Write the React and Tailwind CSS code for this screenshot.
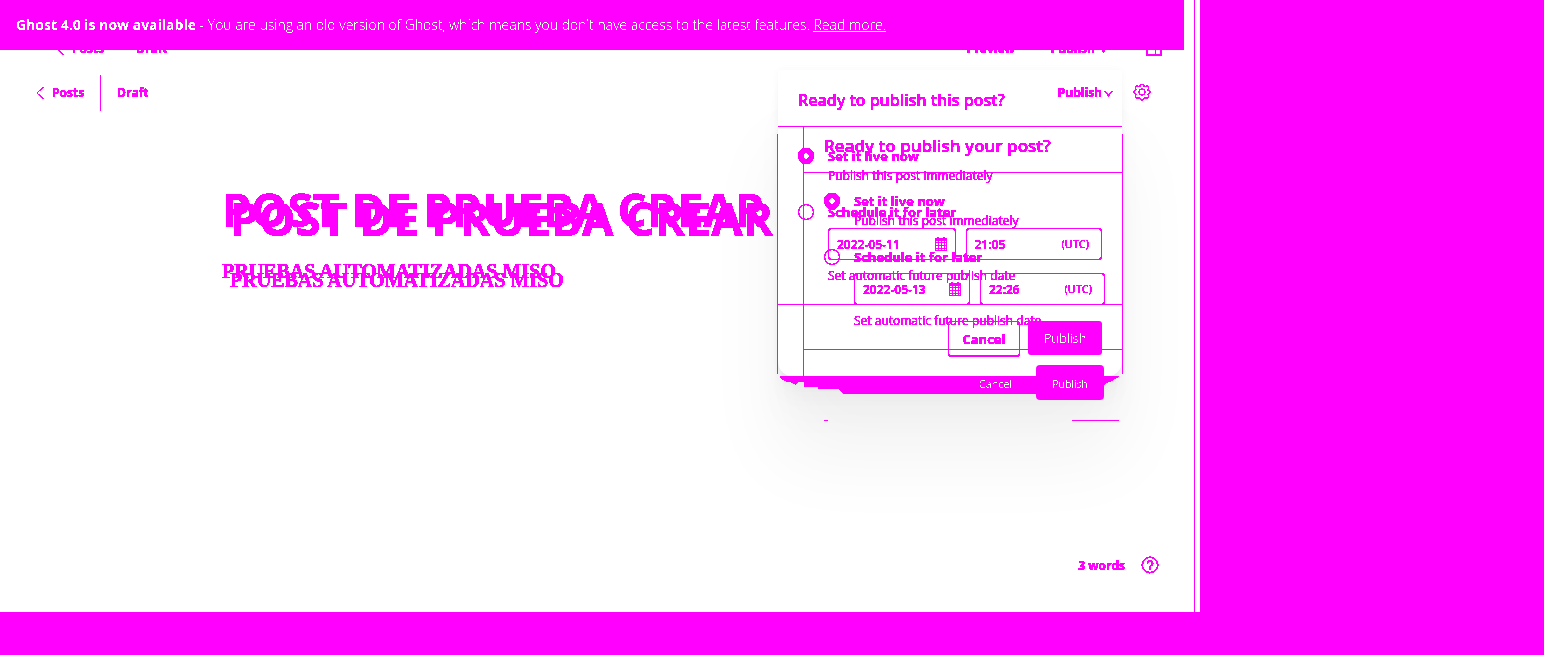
import { useId } from "react";

const INK = "#ff00ff";

function Filters() {
  return (
    <svg className="absolute h-0 w-0" aria-hidden="true">
      <filter id="spread" x="0" y="0" width="100%" height="100%">
        <feComponentTransfer>
          <feFuncA type="discrete" tableValues="0 1 1 1 1 1 1" />
        </feComponentTransfer>
      </filter>
      <filter id="thin" x="0" y="0" width="100%" height="100%">
        <feComponentTransfer>
          <feFuncA type="discrete" tableValues="0 0 1 1" />
        </feComponentTransfer>
      </filter>
    </svg>
  );
}

function ChevronLeft() {
  return (
    <svg width="8" height="14" viewBox="0 0 8 14" fill="none" stroke={INK} strokeWidth="1.2" shapeRendering="crispEdges" aria-hidden="true">
      <path d="M7.5 1 1 7l6.500 6" />
    </svg>
  );
}

function ChevronDown() {
  return (
    <svg width="9" height="8" viewBox="0 0 9 8" fill="none" stroke={INK} strokeWidth="1.6" shapeRendering="crispEdges" aria-hidden="true">
      <path d="M.5 2l4 4.500 4-4.500" />
    </svg>
  );
}

function Gear() {
  return (
    <svg width="18" height="18" viewBox="0 0 24 24" fill="none" stroke={INK} strokeWidth="2" shapeRendering="crispEdges" aria-hidden="true">
      <circle cx="12" cy="12" r="3.800" />
      <path d="M9.600 3.300a2.500 2.500 0 0 1 4.800 0c.3 1.400 1.500 1.900 2.700 1.200a2.400 2.400 0 0 1 3.300 3.300c-.8 1.200-.2 2.400 1.100 2.700a1.800 1.800 0 0 1 0 3.300c-1.300.4-1.900 1.500-1.100 2.700a2.400 2.400 0 0 1-3.300 3.300c-1.200-.8-2.400-.2-2.700 1.200a2.500 2.500 0 0 1-4.800 0c-.3-1.400-1.500-1.900-2.700-1.200a2.400 2.400 0 0 1-3.300-3.300c.8-1.200.2-2.300-1.100-2.700a1.800 1.800 0 0 1 0-3.300c1.300-.3 1.900-1.500 1.100-2.700a2.400 2.400 0 0 1 3.300-3.300c1.200.7 2.400.2 2.700-1.200z" />
    </svg>
  );
}

function Help() {
  return (
    <svg width="18" height="18" viewBox="0 0 18 18" fill="none" stroke={INK} strokeWidth="1.100" aria-hidden="true">
      <circle cx="9" cy="9" r="7.700" />
      <path d="M6.500 7.200a2.500 2.500 0 1 1 3.600 2.200c-.8.400-1.100.8-1.100 1.800" strokeWidth="1.300" />
      <path d="M8.200 13h1.600" strokeWidth="1.300" />
    </svg>
  );
}

function Calendar() {
  return (
    <svg width="12" height="14" viewBox="0 0 12 14" fill={INK} shapeRendering="crispEdges" className="shrink-0" aria-hidden="true">
      <path d="M2 0h2v1h4V0h2v1h2v3H0V1h2z" />
      <path d="M0 4h1v10H0zM3 4h1v10H3zM6 4h1v10H6zM9 4h1v10H9zM11 4h1v10h-1zM0 5h12v1H0zM0 8h12v1H0zM0 11h12v1H0zM0 13h12v1H0z" />
    </svg>
  );
}

function Article({ className }) {
  return (
    <article className={className}>
      <h1 className="text-[46px] leading-[56px] font-bold whitespace-nowrap">POST DE PRUEBA CREAR</h1>
      <p className="mt-[18px] font-['Liberation_Serif',serif] text-[20px] leading-8 font-semibold whitespace-nowrap">
        PRUEBAS AUTOMATIZADAS MISO
      </p>
    </article>
  );
}

function Choice({ name, label, hint, checked }) {
  const id = useId();
  return (
    <div className="grid grid-cols-[30px_1fr]">
      <input
        id={id}
        type="radio"
        name={name}
        defaultChecked={checked}
        className="mt-[2px] h-4 w-4 appearance-none rounded-full border border-[#ff00ff] checked:border-[5px]"
      />
      <label htmlFor={id} className="text-[13px] leading-5 font-bold">{label}</label>
      {hint && <p className="col-start-2 text-[12px] leading-5">{hint}</p>}
    </div>
  );
}

function Panel({ title, titleSize, name, date, time, className, dateWidth, timeWidth, top, buttons }) {
  return (
    <section className={className}>
      <div className="[filter:url(#spread)]">
        <h2 className={`flex h-[57px] items-center border-b border-[#ff00ff] px-5 pt-1 leading-6 ${titleSize}`}>
          {title}
        </h2>
        <div className={top}>
          <Choice name={name} label="Set it live now" hint="Publish this post immediately" checked />
          <div className="mt-4">
            <Choice name={name} label="Schedule it for later" />
          </div>
          <div className="mt-[6px] ml-[30px] flex gap-[10px]">
            <div className={`flex h-8 items-center rounded-[3px] border border-[#ff00ff] px-2 ${dateWidth}`}>
              <input aria-label="Publish date" defaultValue={date} className="w-full min-w-0 bg-transparent pt-[2px] text-[12px] font-semibold outline-none" />
              <Calendar />
            </div>
            <div className={`flex h-8 items-center rounded-[3px] border border-[#ff00ff] pr-3 pl-2 ${timeWidth}`}>
              <input aria-label="Publish time" defaultValue={time} className="w-full min-w-0 bg-transparent pt-[2px] text-[12px] font-semibold outline-none" />
              <span className="text-[11px]">(UTC)</span>
            </div>
          </div>
          <p className="mt-[6px] ml-[30px] text-[12px] leading-5">Set automatic future publish date</p>
        </div>
      </div>
      {buttons}
    </section>
  );
}

function Residue() {
  return (
    <svg className="absolute top-[376px] right-20 h-[46px] w-[340px]" viewBox="780 376 340 46" shapeRendering="crispEdges" aria-hidden="true">
      <path
        fill={INK}
        d="M780 376h340l-3 2-5 3-5 2-3 2h-3v3h-65v6H843l-4-4v-1h-21v-2h-14v-5h-5l-2 1-1 2-2-1-2-1-3-1h-2l-2-1-4-2z"
      />
      <path fill={INK} d="M824 420h4v1h-4zM1072 420h47v1h-47z" />
    </svg>
  );
}

export default function App() {
  return (
    <div className="flex min-h-screen bg-[#ff00ff] pr-[344px] pb-[43px] font-['Open_Sans',sans-serif] text-[#ff00ff]">
      <Filters />
      <main className="relative grid w-full overflow-hidden bg-white">
        <div className="mr-[5px] border-r border-[#ff00ff] [grid-area:1/1]" />

        <div className="relative mr-4 [grid-area:1/1]">
          <header className="flex h-[98px] items-center pr-[22px] pl-14 text-[12px] font-bold [filter:url(#spread)]">
            <a href="#posts" className="flex items-center gap-2"><ChevronLeft />Posts</a>
            <span className="ml-8">Draft</span>
            <button className="ml-auto">Preview</button>
            <button className="ml-9 flex items-center gap-1">Publish<ChevronDown /></button>
            <button aria-label="Toggle sidebar" className="ml-[38px] flex h-[13px] w-4 justify-end border-2 border-[#ff00ff]">
              <span className="h-full w-[5px] border-l border-[#ff00ff]" />
            </button>
          </header>
          <p className="absolute inset-x-0 top-0 h-[50px] bg-[#ff00ff] px-4 text-[14px] leading-[49px] font-light whitespace-nowrap text-white">
            <span className="block [filter:url(#thin)]">
              <strong className="font-bold">Ghost 4.0 is now available</strong> - You are using an old version of Ghost, which means you don't have access to the latest features.{" "}
              <a href="#more" className="underline">Read more.</a>
            </span>
          </p>
          <Article className="mt-[83px] pl-[222px] [filter:url(#spread)]" />
        </div>

        <div className="relative flex flex-col pt-14 [filter:url(#spread)] [grid-area:1/1]">
          <header className="flex h-[73px] items-center pr-[49px] pl-9 text-[12px] font-bold">
            <a href="#posts" className="flex items-center gap-2"><ChevronLeft />Posts</a>
            <span className="ml-4 h-9 border-l border-[#ff00ff] pl-4 leading-9">Draft</span>
          </header>
          <Article className="mt-[61px] pl-[230px]" />
          <footer className="mt-auto flex h-[59px] items-start justify-end gap-4 pr-[41px] text-[12px] leading-6 font-bold">
            <span className="pt-px">3 words</span>
            <button aria-label="Help" className="flex h-6 items-center"><Help /></button>
          </footer>
        </div>

        <Panel
          className="absolute top-[70px] right-[78px] w-[344px] rounded-[3px] rounded-b-2xl bg-white shadow-[0_0_8px_rgba(0,0,0,0.03),0_7px_6px_rgba(0,0,0,0.01),0_12px_10px_rgba(0,0,0,0.015),0_22px_18px_rgba(0,0,0,0.02),0_42px_34px_rgba(0,0,0,0.02),0_80px_80px_rgba(0,0,0,0.05)]"
          title="Ready to publish this post?"
          titleSize="text-[16px] font-semibold"
          name="publish-now"
          date="2022-05-11"
          time="21:05"
          dateWidth="w-32"
          timeWidth="w-[137px]"
          top="border-b border-[#ff00ff] px-5 pt-[19px] pb-[18px]"
          buttons={
            <div className="flex justify-end gap-2 px-5 pt-4 pb-5 text-[13px]">
              <button className="h-9 w-[72px] rounded-[3px] border border-b-2 border-[#ff00ff] pt-[2px] font-bold [filter:url(#spread)]">Cancel</button>
              <button className="h-[34px] w-[74px] rounded-[3px] bg-[#ff00ff] pt-[2px] font-light text-white">
                <span className="[filter:url(#thin)]">Publish</span>
              </button>
            </div>
          }
        />
        <div className="absolute top-[134px] right-[77px] h-[240px] w-[346px] border-x border-[#ff00ff]" aria-hidden="true" />

        <Residue />
        <Panel
          className="absolute top-[116px] right-[77px] w-[319px]"
          title="Ready to publish your post?"
          titleSize="text-[17px] font-semibold"
          name="publish-later"
          date="2022-05-13"
          time="22:26"
          dateWidth="w-[116px]"
          timeWidth="w-[125px]"
          top="border-b border-[#ff00ff] pr-[18px] pl-5 pt-[18px] pb-[18px]"
          buttons={
            <div className="flex justify-end gap-2 pt-[15px] pr-[19px]">
              <button className="h-[35px] px-4 pt-1 text-[11px] font-light text-white"><span className="[filter:url(#thin)]">Cancel</span></button>
              <button className="h-[35px] w-[68px] rounded-[4px] bg-[#ff00ff] pt-1 text-[11px] font-light text-white">
                <span className="[filter:url(#thin)]">Publish</span>
              </button>
            </div>
          }
        />
        <div className="absolute top-[127px] right-[396px] h-[252px] border-l border-[#ff00ff]" aria-hidden="true" />

        <div className="absolute top-[82px] right-[49px] flex items-center gap-5 text-[12px] leading-[18px] font-bold [filter:url(#spread)]">
          <button className="flex items-center gap-[2px] pt-[2px]">Publish<ChevronDown /></button>
          <button aria-label="Settings"><Gear /></button>
        </div>
      </main>
    </div>
  );
}
